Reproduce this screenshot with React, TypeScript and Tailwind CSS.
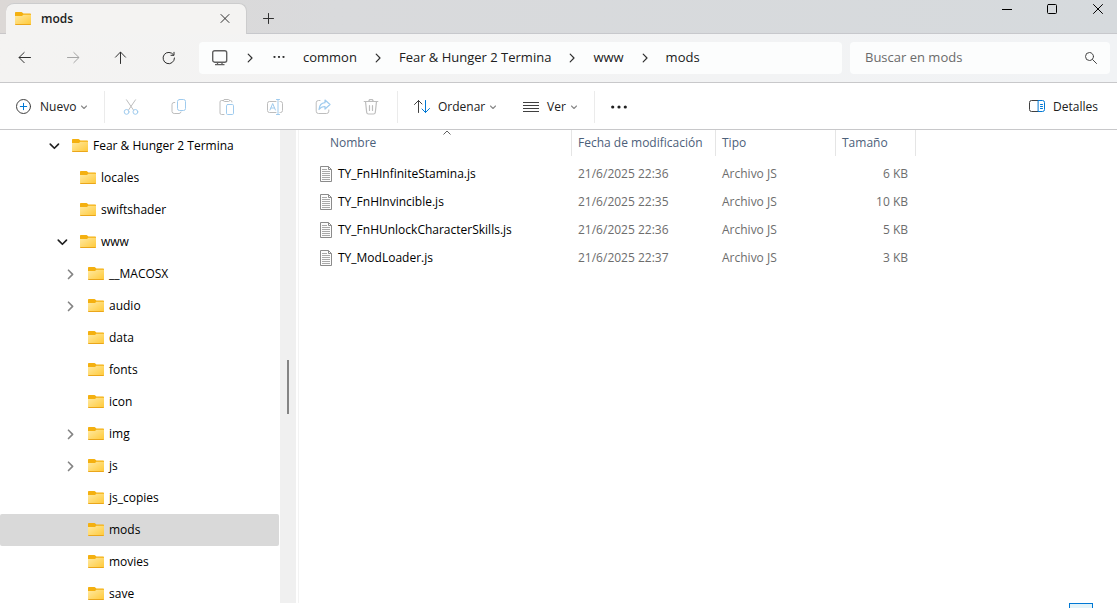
import React, { useState } from "react";

type TreeNode = {
  name: string;
  level: number;
  state?: "open" | "closed";
};

type FileRow = {
  name: string;
  date: string;
  type: string;
  size: string;
};

const TREE: TreeNode[] = [
  { name: "Fear & Hunger 2 Termina", level: 0, state: "open" },
  { name: "locales", level: 1 },
  { name: "swiftshader", level: 1 },
  { name: "www", level: 1, state: "open" },
  { name: "__MACOSX", level: 2, state: "closed" },
  { name: "audio", level: 2, state: "closed" },
  { name: "data", level: 2 },
  { name: "fonts", level: 2 },
  { name: "icon", level: 2 },
  { name: "img", level: 2, state: "closed" },
  { name: "js", level: 2, state: "closed" },
  { name: "js_copies", level: 2 },
  { name: "mods", level: 2 },
  { name: "movies", level: 2 },
  { name: "save", level: 2 },
];

const FILES: FileRow[] = [
  { name: "TY_FnHInfiniteStamina.js", date: "21/6/2025 22:36", type: "Archivo JS", size: "6 KB" },
  { name: "TY_FnHInvincible.js", date: "21/6/2025 22:35", type: "Archivo JS", size: "10 KB" },
  { name: "TY_FnHUnlockCharacterSkills.js", date: "21/6/2025 22:36", type: "Archivo JS", size: "5 KB" },
  { name: "TY_ModLoader.js", date: "21/6/2025 22:37", type: "Archivo JS", size: "3 KB" },
];

const CRUMBS = ["common", "Fear & Hunger 2 Termina", "www", "mods"];

const INDENT = ["pl-12", "pl-14", "pl-16"];

const Icon: React.FC<{
  children: React.ReactNode;
  className?: string;
}> = ({ children, className = "size-4 text-[#404040]" }) => (
  <svg
    viewBox="0 0 16 16"
    fill="none"
    stroke="currentColor"
    strokeLinecap="round"
    strokeLinejoin="round"
    className={`shrink-0 ${className}`}
    aria-hidden="true"
  >
    {children}
  </svg>
);

const Folder = () => (
  <svg viewBox="0 0 16 14" className="h-3.5 w-4 shrink-0" aria-hidden="true">
    <defs>
      <linearGradient id="folder" x1="0" y1="0" x2="1" y2="1">
        <stop offset="0" stopColor="#ffe9a2" />
        <stop offset="1" stopColor="#ffc937" />
      </linearGradient>
    </defs>
    <path d="M0 .8Q0 0 .8 0h5.700q.5 0 .8.4L8.400 1.500h6.800q.8 0 .8.800V6H0z" fill="#f4b010" />
    <path d="M0 4h7l1.300-1.200H16v9.500q0 .7-.8.7H.8q-.8 0-.8-.7z" fill="url(#folder)" />
    <path d="M.3 12.500h15.400" stroke="#eba61a" />
  </svg>
);

const Document = () => (
  <svg viewBox="0 0 12 16" fill="none" className="h-4 w-3 shrink-0" aria-hidden="true">
    <path d="M.5.5h8l3 3v12H.5z" fill="#fcfcfc" stroke="#8b8b8b" />
    <path d="M8.500.5v3h3" stroke="#8b8b8b" />
    <path d="M2 3.500h5M2 5.500h8M2 7.500h8M2 9.500h8M2 11.500h8M2 13.500h8" stroke="#a9a9a9" />
  </svg>
);

const Chevron = () => (
  <Icon className="size-4 text-[#303030]">
    <path d="M6.200 4.200 10 8l-3.800 3.800" strokeWidth="1.200" />
  </Icon>
);

const SmallDown = () => (
  <Icon className="size-2 text-[#8a8a8a]">
    <path d="m3 6 5 5 5-5" strokeWidth="2.200" />
  </Icon>
);

const Divider = () => <span className="h-8 w-px shrink-0 bg-[#ebebeb]" />;

const TitleBar = () => (
  <header className="flex h-[34px] shrink-0 bg-linear-to-r from-[#dcd8d6] via-[#d9dadc] via-30% to-[#d6dadd]">
    <div className="w-1.5 border-b border-[#c9c7c9]" />
    <div className="mt-[3px] flex w-[241px] items-center rounded-t-lg border-r border-t border-[#cccccd] bg-[#f4f3f2] pl-[9px]">
      <Folder />
      <span className="ml-2.5 flex-1 text-xs font-semibold text-[#1c1c1c]">mods</span>
      <button aria-label="Cerrar pestaña" className="mr-[13px] flex size-4 items-center justify-center">
        <Icon className="size-4 text-[#303030]">
          <path d="m4 3.500 8 8M12 3.500l-8 8" />
        </Icon>
      </button>
    </div>
    <div className="flex flex-1 justify-between border-b border-[#c7c8cc]">
      <button aria-label="Nueva pestaña" className="ml-3.5 mt-0.5 flex items-center">
        <Icon className="size-4 text-[#303030]">
          <path d="M7.500 3.500v10M2.500 8.500h10" />
        </Icon>
      </button>
      <div className="flex h-[18px] items-center gap-[30px] pr-[11px] text-black">
        <button aria-label="Minimizar">
          <Icon className="size-4">
            <path d="M4 8.500h10" strokeLinecap="butt" />
          </Icon>
        </button>
        <button aria-label="Maximizar">
          <Icon className="size-4">
            <rect x="3.500" y="3.500" width="9" height="9" rx="1" />
          </Icon>
        </button>
        <button aria-label="Cerrar">
          <Icon className="size-4">
            <path d="m3.500 3.500 9 9M12.500 3.500l-9 9" />
          </Icon>
        </button>
      </div>
    </div>
  </header>
);

const NavButton: React.FC<{
  label: string;
  disabled?: boolean;
  children: React.ReactNode;
}> = ({ label, disabled, children }) => (
  <button
    aria-label={label}
    disabled={disabled}
    className={`flex size-8 items-center justify-center ${
      disabled ? "text-[#a5a5a5]" : "text-[#303030]"
    }`}
  >
    <Icon className="size-4">{children}</Icon>
  </button>
);

const NavBar = () => (
  <div className="flex h-[49px] shrink-0 items-center border-b border-[#c8c8ca] bg-linear-to-r from-[#f4f3f2] to-[#f1f3f5] pl-2 pr-[7px]">
    <div className="ml-px flex gap-4">
      <NavButton label="Atrás">
        <path d="M13.500 7.500H2.200M7.200 2.500l-5.200 5 5.200 5.200" />
      </NavButton>
      <NavButton label="Adelante" disabled>
        <path d="M2.500 7.500h11.300M8.800 2.500l5.200 5-5.200 5.200" />
      </NavButton>
      <NavButton label="Subir">
        <path d="M7.500 13.500V2.200M2.500 7.200l5-5.200 5 5.200" />
      </NavButton>
      <NavButton label="Actualizar">
        <path d="M12.500 4.800a5.700 5.700 0 1 0 1 3.200M13 2.300v3h-3" />
      </NavButton>
    </div>
    <nav
      aria-label="Ruta"
      className="ml-3.5 flex h-8 flex-1 items-center rounded bg-[#fcfdfd] pl-3 text-[13px] text-[#202020]"
    >
      <svg viewBox="0 0 18 18" fill="none" className="size-[18px] text-[#606060]" aria-hidden="true">
        <rect x="1.700" y="1.700" width="14" height="11.500" rx="2" stroke="currentColor" strokeWidth="1.400" />
        <path d="M6.500 13v2.500M11 13v2.500M4 15.700h9.500" stroke="currentColor" strokeWidth="1.300" />
      </svg>
      <span className="flex w-[42px] justify-center">
        <Chevron />
      </span>
      <button aria-label="Más carpetas" className="ml-px mr-[17px] text-[#303030]">
        <svg viewBox="0 0 14 4" fill="currentColor" className="h-1 w-3.5">
          <circle cx="2.500" cy="1" r="1.100" />
          <circle cx="7" cy="1" r="1.100" />
          <circle cx="11.500" cy="1" r="1.100" />
        </svg>
      </button>
      {CRUMBS.map((crumb, i) => (
        <React.Fragment key={crumb}>
          {i > 0 && (
            <span className="flex w-[42px] justify-center">
              <Chevron />
            </span>
          )}
          <a href="#" className="whitespace-nowrap">
            {crumb}
          </a>
        </React.Fragment>
      ))}
    </nav>
    <label className="ml-2 flex h-8 w-[260px] items-center rounded bg-[#fcfdfd] pl-[15px] pr-[11px]">
      <input
        type="text"
        aria-label="Buscar en mods"
        placeholder="Buscar en mods"
        className="min-w-0 flex-1 bg-transparent text-[13px] outline-none placeholder:text-[#6b6b6b]"
      />
      <Icon className="size-4 text-[#454545]">
        <circle cx="6.500" cy="6.500" r="4" />
        <path d="m9.500 9.500 4 4" />
      </Icon>
    </label>
  </div>
);

const GRAY = "#bdbdbd";
const BLUE = "#9fcbee";

const ACTIONS = [
  {
    label: "Cortar",
    icon: (
      <>
        <path d="m3.500.8 6.800 10M12.500.8l-6.800 10" stroke={GRAY} />
        <circle cx="3.600" cy="12.900" r="2.400" stroke={BLUE} />
        <circle cx="12.400" cy="12.900" r="2.400" stroke={BLUE} />
      </>
    ),
  },
  {
    label: "Copiar",
    icon: (
      <>
        <path d="M3.800 3.500H3a2 2 0 0 0-2 2v7A2.200 2.200 0 0 0 3.200 14.500H8a2 2 0 0 0 2-1.500" stroke={GRAY} />
        <rect x="6.500" y=".5" width="8" height="11" rx="2" stroke={BLUE} />
      </>
    ),
  },
  {
    label: "Pegar",
    icon: (
      <>
        <path d="M4.500 1.500h-2A1.500 1.500 0 0 0 1 3v11a1.500 1.500 0 0 0 1.500 1.500H5M10.500 1.500h1A1.500 1.500 0 0 1 13 3" stroke={GRAY} />
        <rect x="4.500" y=".5" width="6" height="2" rx="1" stroke={GRAY} />
        <rect x="7.500" y="5.500" width="7" height="10" rx="1.200" stroke={BLUE} />
      </>
    ),
  },
  {
    label: "Cambiar nombre",
    icon: (
      <>
        <path d="M9 2.500H2.500a2 2 0 0 0-2 2v7a2 2 0 0 0 2 2H9M13 2.500h.5a2 2 0 0 1 2 2v7a2 2 0 0 1-2 2H13" stroke={GRAY} />
        <path d="m3 11 2.700-6.500L8.400 11M3.900 9h3.600M11 .5v15M9.500.5h3M9.500 15.500h3" stroke={BLUE} />
      </>
    ),
  },
  {
    label: "Compartir",
    icon: (
      <>
        <path d="M5 1.500H3.500a2.300 2.300 0 0 0-2.300 2.300v8.400a2.300 2.300 0 0 0 2.300 2.300h8a2.300 2.300 0 0 0 2.300-2.300V11" stroke={GRAY} />
        <path d="M10 1 15 5.500 10 10V7.500c-2.800 0-4.500.8-6 3 .3-3.500 2.200-6.500 6-6.800z" stroke={BLUE} strokeWidth="1.200" />
      </>
    ),
  },
  {
    label: "Eliminar",
    icon: (
      <>
        <path
          d="M1.200 2.500h13.600M2.500 2.500l1.200 11A1.800 1.800 0 0 0 5.500 15h5a1.800 1.800 0 0 0 1.800-1.500l1.200-11M5.800 2.500a2.200 2.200 0 0 1 4.400 0M6.500 6.500v5M9.500 6.500v5"
          stroke={GRAY}
          strokeWidth="1.200"
        />
      </>
    ),
  },
];

const Toolbar = () => (
  <div className="flex h-[47px] shrink-0 items-center border-b border-[#c8c8ca] bg-white pl-4 pr-[19px] pt-0.5 text-xs text-[#202020]">
    <button className="flex w-[88px] shrink-0 items-center">
      <Icon>
        <circle cx="7.500" cy="7.500" r="7" />
        <path d="M7.500 4.300v6.400M4.300 7.500h6.400" stroke="#0078d4" />
      </Icon>
      <span className="ml-2">Nuevo</span>
      <span className="ml-1">
        <SmallDown />
      </span>
    </button>
    <Divider />
    <div className="ml-[18px] flex gap-8">
      {ACTIONS.map(({ label, icon }) => (
        <button key={label} aria-label={label} disabled>
          <Icon className="size-4">{icon}</Icon>
        </button>
      ))}
    </div>
    <span className="w-[18px]" />
    <Divider />
    <button className="ml-4 flex w-[109px] shrink-0 items-center">
      <Icon>
        <path d="M4.500 13.500V1.500M.5 5.500l4-4L8 5" />
        <path d="M11.500 1.500v12M8 10l3.500 3.500 4-4" stroke="#0078d4" />
      </Icon>
      <span className="ml-2">Ordenar</span>
      <span className="ml-1">
        <SmallDown />
      </span>
    </button>
    <button className="flex w-[71px] shrink-0 items-center">
      <Icon>
        <path d="M0 3.500h16M0 6.500h16M0 9.500h16M0 12.500h16" strokeLinecap="butt" />
      </Icon>
      <span className="ml-2">Ver</span>
      <span className="ml-1">
        <SmallDown />
      </span>
    </button>
    <Divider />
    <button aria-label="Ver más" className="ml-4">
      <svg viewBox="0 0 16 4" fill="#202020" className="h-1 w-4">
        <circle cx="1.700" cy="2" r="1.600" />
        <circle cx="8" cy="2" r="1.600" />
        <circle cx="14.300" cy="2" r="1.600" />
      </svg>
    </button>
    <button className="ml-auto flex items-center gap-2">
      <Icon>
        <path d="M9.500 1.500h-7a2 2 0 0 0-2 2v7a2 2 0 0 0 2 2h7" />
        <path d="M9.500 1.500h4a2 2 0 0 1 2 2v7a2 2 0 0 1-2 2h-4zM11.500 5.500h2M11.500 7.500h2M11.500 9.500h2" stroke="#0078d4" />
      </Icon>
      Detalles
    </button>
  </div>
);

const Sidebar: React.FC<{
  selected: string;
  setSelected: (name: string) => void;
}> = ({ selected, setSelected }) => (
  <aside className="flex w-[299px] shrink-0 border-r border-[#f3f3f3]">
    <ul className="w-[279px] overflow-hidden text-xs text-black">
      {TREE.map(({ name, level, state }) => (
        <li key={name}>
          <button
            onClick={() => setSelected(name)}
            className={`flex h-8 w-full items-center rounded-xs ${INDENT[level]} ${
              selected === name ? "bg-[#d9d9d9]" : ""
            }`}
          >
            <span className="mr-3 flex w-3 justify-center">
              {state === "open" && (
                <Icon className="size-3 text-[#202020]">
                  <path d="m3 5.500 5.500 5.500L14 5.500" strokeWidth="2.200" />
                </Icon>
              )}
              {state === "closed" && (
                <Icon className="size-3 text-[#858585]">
                  <path d="m6 3 5.500 5.500L6 14" strokeWidth="2.200" />
                </Icon>
              )}
            </span>
            <Folder />
            <span className="ml-[5px] whitespace-nowrap">{name}</span>
          </button>
        </li>
      ))}
    </ul>
    <div className="ml-px flex w-4 flex-col items-center bg-[#f0f0f0]">
      <div className="h-[230px]" />
      <div className="h-[54px] w-0.5 bg-[#858585]" />
    </div>
  </aside>
);

const HeadCell: React.FC<{ label: string; sorted?: boolean }> = ({ label, sorted }) => (
  <th scope="col" className="h-[30px] p-0 text-left align-top font-normal">
    <div
      className={`relative flex h-[26px] items-center border-r border-[#e5e5e5] ${
        sorted ? "ml-6 pl-[7px]" : "pl-1.5"
      }`}
    >
      {label}
      {sorted && (
        <svg viewBox="0 0 8 5" fill="none" className="absolute left-1/2 top-0 h-[5px] w-2 -translate-x-1/2">
          <path d="M.5 4.500 4 1l3.500 3.500" stroke="#606060" />
        </svg>
      )}
    </div>
  </th>
);

const FileList = () => (
  <main className="min-w-0 flex-1 overflow-hidden">
    <table className="w-[617px] table-fixed border-collapse text-xs text-[#6d6d6d]">
      <colgroup>
        <col className="w-[273px]" />
        <col className="w-36" />
        <col className="w-30" />
        <col className="w-20" />
      </colgroup>
      <thead className="text-[#4c607a]">
        <tr>
          <HeadCell label="Nombre" sorted />
          <HeadCell label="Fecha de modificación" />
          <HeadCell label="Tipo" />
          <HeadCell label="Tamaño" />
        </tr>
      </thead>
      <tbody>
        {FILES.map(({ name, date, type, size }) => (
          <tr key={name} className="h-7">
            <td className="py-0 pl-[21px] text-black">
              <div className="flex items-center gap-1.5">
                <Document />
                {name}
              </div>
            </td>
            <td className="py-0 pl-1.5">{date}</td>
            <td className="py-0 pl-1.5">{type}</td>
            <td className="py-0 pr-2 text-right">{size}</td>
          </tr>
        ))}
      </tbody>
    </table>
  </main>
);

const App = () => {
  const [selected, setSelected] = useState("mods");

  return (
    <div className="flex h-screen flex-col overflow-hidden bg-white font-['Segoe_UI','Open_Sans',sans-serif]">
      <TitleBar />
      <NavBar />
      <Toolbar />
      <div className="flex min-h-0 flex-1">
        <Sidebar selected={selected} setSelected={setSelected} />
        <FileList />
      </div>
      <footer className="flex h-[5px] shrink-0 justify-end overflow-hidden pr-6">
        <button aria-label="Vista de detalles" className="h-5 w-6 border border-[#0078d4] bg-[#e3f3f9]" />
      </footer>
    </div>
  );
};

export default App;
